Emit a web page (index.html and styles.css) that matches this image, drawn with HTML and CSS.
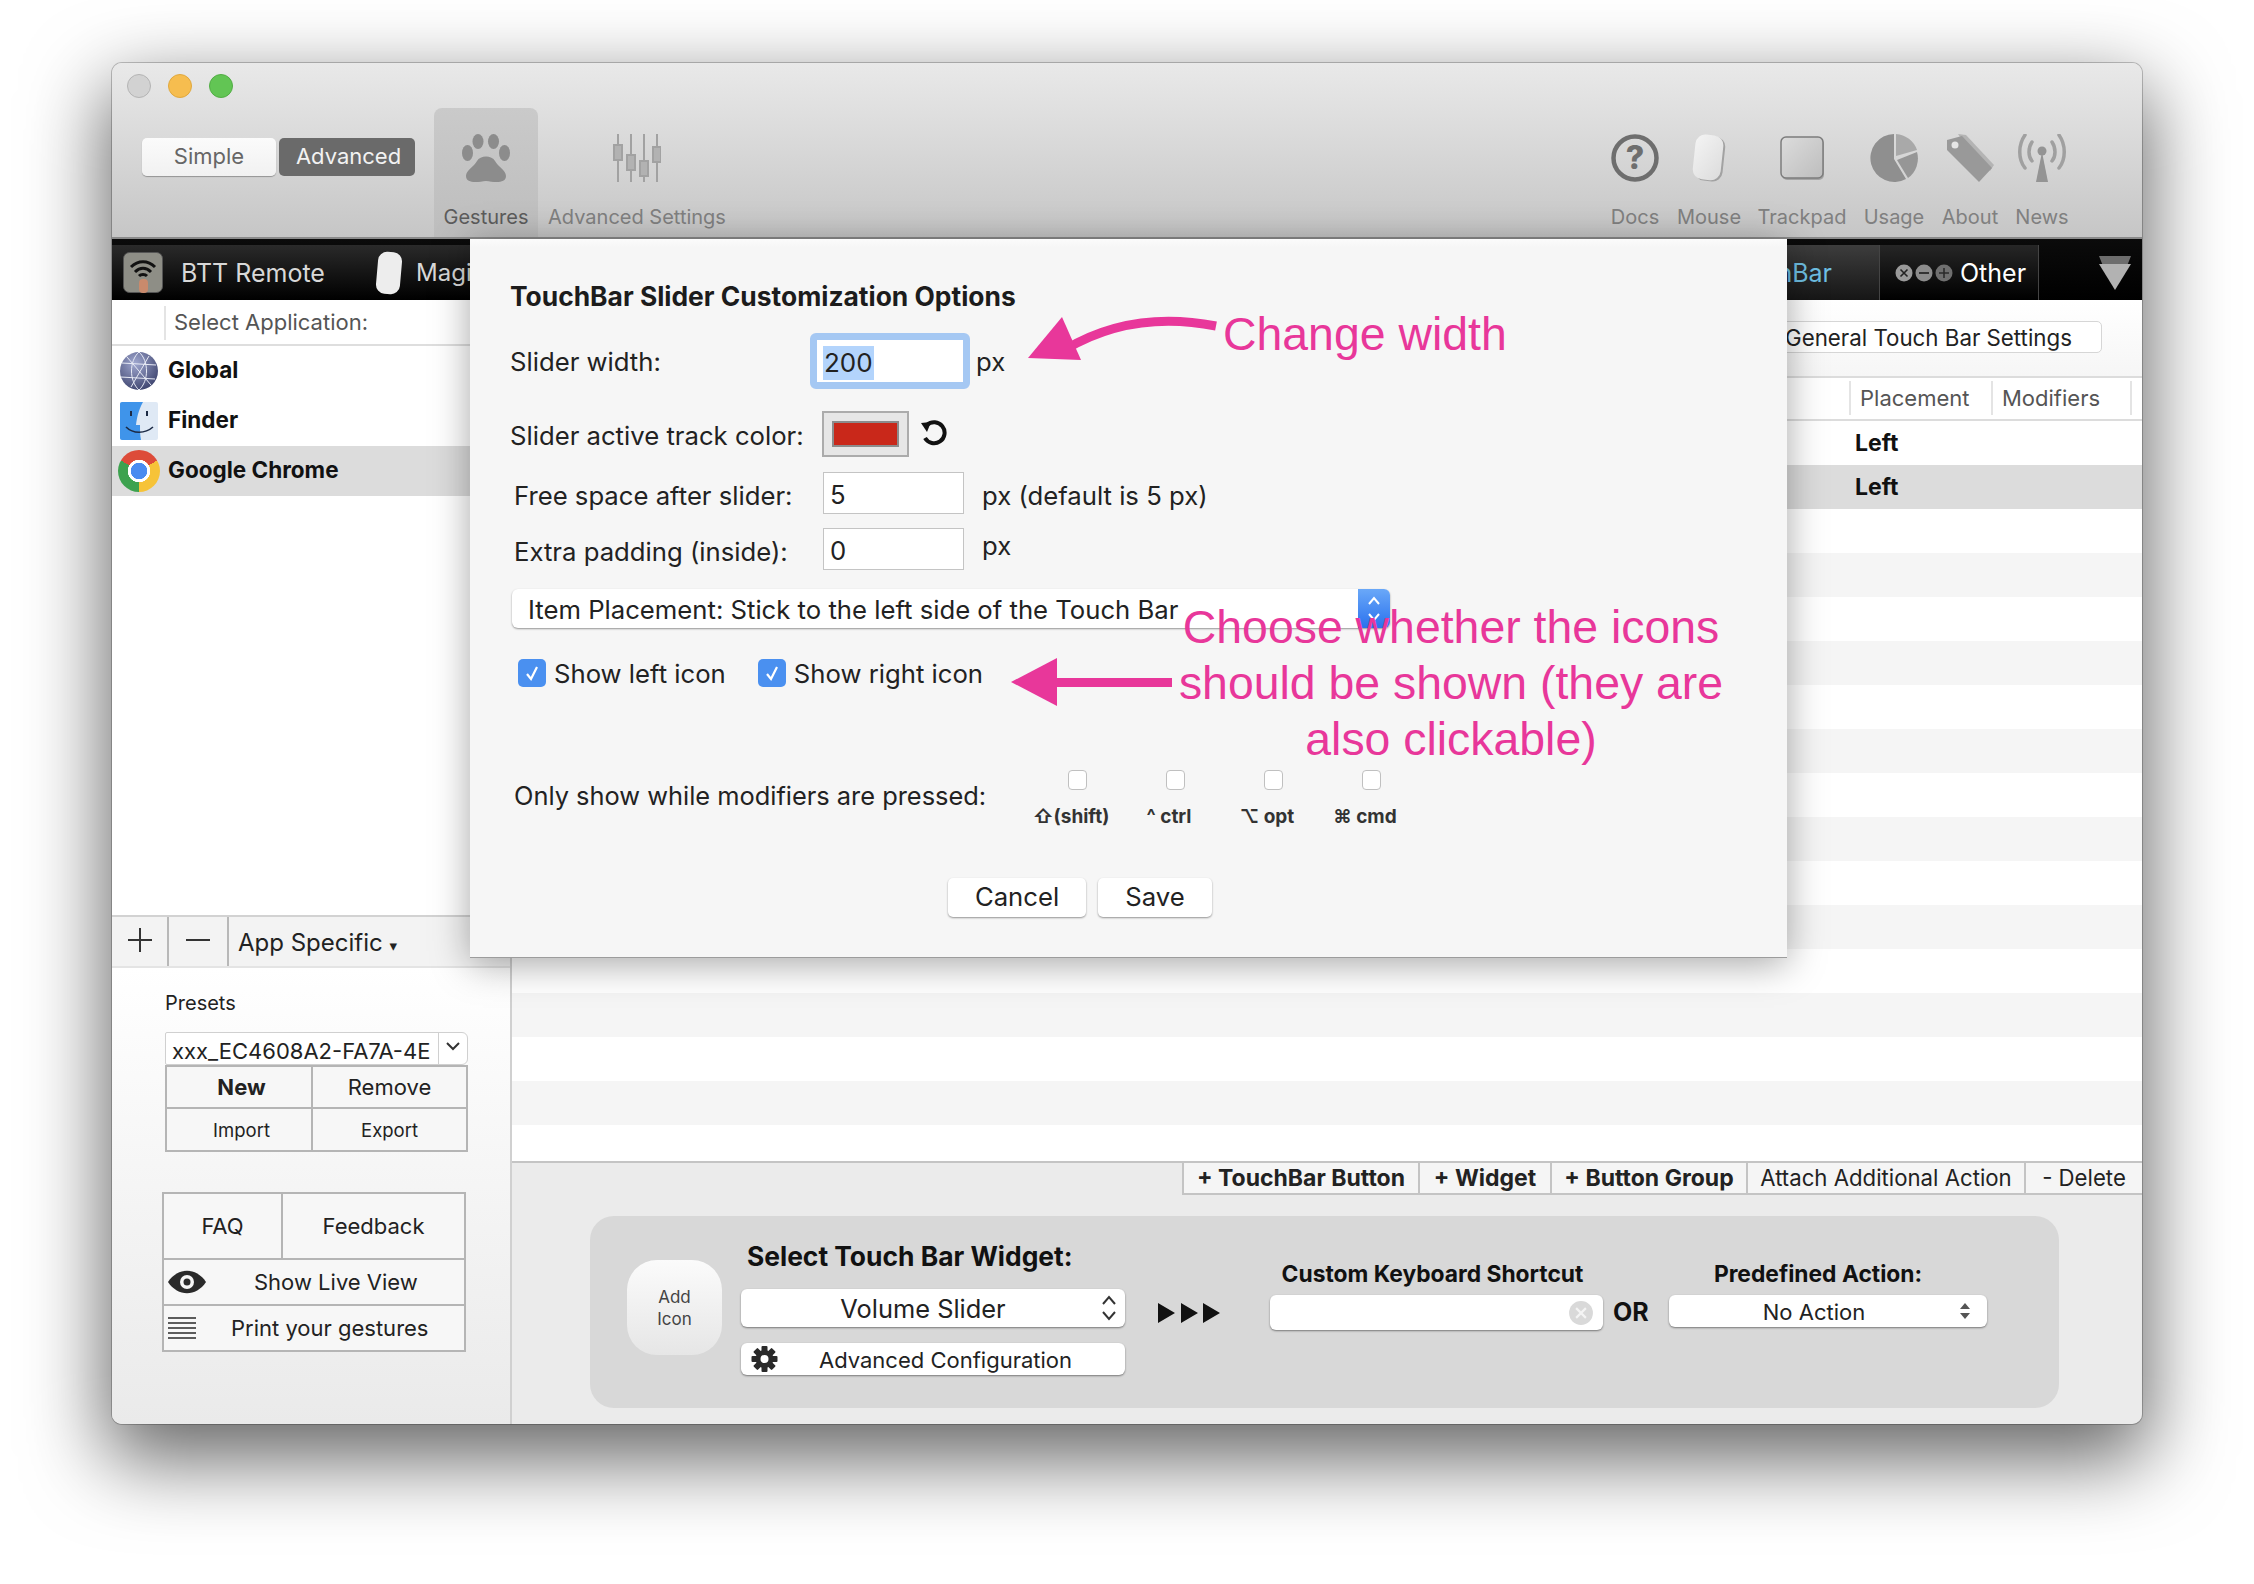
FILE: index.html
```html
<!DOCTYPE html>
<html lang="en">
<head>
  <meta charset="UTF-8">
  <title>BetterTouchTool</title>
  <link rel="stylesheet" href="styles.css">
</head>
<body>

<div class="window">

  <div class="toolbar">
    <div class="traffic">
      <span class="light light-grey"></span>
      <span class="light light-yellow"></span>
      <span class="light light-green"></span>
    </div>
    <div class="tools">
      <div class="segment">
        <span class="seg-btn seg-simple">Simple</span>
        <span class="seg-btn seg-advanced">Advanced</span>
      </div>
      <div class="tool tool-active tool-gestures">
        <svg class="tool-icon" width="48" height="48" viewBox="0 0 48 48" fill="#8c8c8c">
          <ellipse cx="5.5" cy="19" rx="5.5" ry="8"/>
          <ellipse cx="16" cy="7.5" rx="5.5" ry="7.5"/>
          <ellipse cx="31.5" cy="7.5" rx="5.5" ry="7.5"/>
          <ellipse cx="42.5" cy="19" rx="5.5" ry="8"/>
          <path d="M4 42C4 36 12 33 15 27C18 21 30 21 33 27C36 33 44 36 44 42C44 50 32 48 24 47C16 48 4 50 4 42Z"/>
        </svg>
        <span class="tool-label">Gestures</span>
      </div>
      <div class="tool tool-settings">
        <svg class="tool-icon" width="48" height="48" viewBox="0 0 48 48" stroke="#a2a2a2" stroke-width="2" fill="#b2b2b2">
          <path d="M5 0V48M18 0V48M31 0V48M44 0V48" fill="none"/>
          <rect x="1" y="11" width="8" height="15"/>
          <rect x="14" y="21" width="8" height="15"/>
          <rect x="27" y="27" width="8" height="15"/>
          <rect x="40" y="13" width="8" height="15"/>
        </svg>
        <span class="tool-label">Advanced Settings</span>
      </div>

      <div class="tools-right">
        <div class="tool tool-docs">
          <svg class="tool-icon" width="48" height="48" viewBox="0 0 48 48">
            <circle cx="24" cy="24" r="21.5" fill="none" stroke="#6e6e6e" stroke-width="4.5"/>
            <text x="24" y="35" text-anchor="middle" class="svg-q">?</text>
          </svg>
          <span class="tool-label">Docs</span>
        </div>
        <div class="tool tool-mouse">
          <svg class="tool-icon" width="48" height="48" viewBox="0 0 48 48">
            <defs>
              <linearGradient id="mouseFill" x1="0" y1="0" x2="1" y2="1">
                <stop offset="0" stop-color="#f4f4f4"/>
                <stop offset="1" stop-color="#dcdcdc"/>
              </linearGradient>
            </defs>
            <rect x="11" y="2" width="28" height="45" rx="10" fill="#a2a2a2" transform="rotate(6 24 24)"/>
            <rect x="9" y="1" width="28" height="45" rx="10" fill="url(#mouseFill)" transform="rotate(6 24 24)"/>
          </svg>
          <span class="tool-label">Mouse</span>
        </div>
        <div class="tool tool-trackpad">
          <svg class="tool-icon" width="48" height="48" viewBox="0 0 48 48">
            <defs>
              <linearGradient id="padFill" x1="0" y1="0" x2="1" y2="1">
                <stop offset="0" stop-color="#dcdcdc"/>
                <stop offset="1" stop-color="#bdbdbd"/>
              </linearGradient>
            </defs>
            <rect x="4" y="5" width="42" height="41" rx="5" fill="#a4a4a4"/>
            <rect x="3" y="3" width="42" height="41" rx="5" fill="url(#padFill)" stroke="#7c7c7c" stroke-width="1.5"/>
          </svg>
          <span class="tool-label">Trackpad</span>
        </div>
        <div class="tool tool-usage">
          <svg class="tool-icon" width="48" height="48" viewBox="0 0 48 48">
            <path d="M24 25L24 0A24 24 0 1 0 36 45Z" fill="#8f8f8f"/>
            <path d="M26 22L26 0A24 24 0 0 1 47 16Z" fill="#a9a9a9"/>
            <path d="M27 26L47 18A24 24 0 0 1 38 44Z" fill="#969696"/>
          </svg>
          <span class="tool-label">Usage</span>
        </div>
        <div class="tool tool-about">
          <svg class="tool-icon" width="48" height="48" viewBox="0 0 48 48">
            <path d="M12 0L20 1L48 31L44 37L14 3Z" fill="#b4b4b4"/>
            <path d="M1 6L16 2L46 34L33 48L1 16Z" fill="#999"/>
            <circle cx="9" cy="11" r="3.5" fill="#e6e6e6"/>
          </svg>
          <span class="tool-label">About</span>
        </div>
        <div class="tool tool-news">
          <svg class="tool-icon" width="48" height="48" viewBox="0 0 48 48">
            <path d="M24 18L18 48H30Z" fill="#949494"/>
            <circle cx="24" cy="17" r="4.5" fill="#949494"/>
            <path d="M14 8C10 14 10 22 14 27M34 8C38 14 38 22 34 27M7 1C0 11 0 25 7 34M41 1C48 11 48 25 41 34" fill="none" stroke="#a0a0a0" stroke-width="3.5" stroke-linecap="round"/>
          </svg>
          <span class="tool-label">News</span>
        </div>
      </div>
    </div>
  </div>

  <div class="tabbar">
    <div class="tab tab-btt">
      <svg width="40" height="41" viewBox="0 0 40 41">
        <rect x="0.5" y="0.5" width="39" height="40" rx="6" fill="#8e8e86" stroke="#555"/>
        <path d="M8 15C15 8 25 8 32 15M12 20C17 15 23 15 28 20M16 24C18 22 22 22 24 24" fill="none" stroke="#111" stroke-width="3"/>
        <rect x="16" y="27" width="9" height="14" rx="4" fill="#c98a6c"/>
      </svg>
      <span>BTT Remote</span>
    </div>
    <div class="tab tab-magic">
      <svg width="30" height="44" viewBox="0 0 30 44">
        <rect x="3" y="1" width="24" height="42" rx="9" fill="#ededed" transform="rotate(5 15 22)"/>
      </svg>
      <span>Magic Mouse</span>
    </div>
    <div class="tab tab-touchbar">
      <span>TouchBar</span>
    </div>
    <div class="tab tab-other">
      <svg width="58" height="18" viewBox="0 0 58 18">
        <circle cx="9" cy="9" r="8.5" fill="#9a9a9a"/>
        <path d="M5.5 5.5L12.5 12.5M12.5 5.5L5.5 12.5" stroke="#222" stroke-width="1.6"/>
        <circle cx="29" cy="9" r="8.5" fill="#8c8c8c"/>
        <path d="M24 9H34" stroke="#333" stroke-width="2"/>
        <circle cx="49" cy="9" r="8.5" fill="#6f6f6f"/>
        <path d="M44 9H54M49 4V14" stroke="#2b2b2b" stroke-width="1.6"/>
      </svg>
      <span>Other</span>
    </div>
    <div class="tab-end">
      <svg width="32" height="34" viewBox="0 0 32 34">
        <path d="M0 0H32L28 10H4Z" fill="#6d6d6d"/>
        <path d="M0 8H32L16 34Z" fill="#b2b2b2"/>
      </svg>
    </div>
  </div>

  <div class="main">

    <div class="sidebar">
      <div class="app-head"><span class="app-head-label">Select Application:</span></div>
      <div class="app-list">
        <div class="app-row">
          <svg width="40" height="40" viewBox="0 0 40 40">
            <defs>
              <radialGradient id="globeFill" cx="0.4" cy="0.3" r="0.8">
                <stop offset="0" stop-color="#a0a8d0"/>
                <stop offset="1" stop-color="#363c66"/>
              </radialGradient>
            </defs>
            <circle cx="20" cy="20" r="19" fill="url(#globeFill)"/>
            <path d="M20 1C10 10 10 30 20 39M20 1C30 10 30 30 20 39M3 12L37 14M2 26L36 28M8 6L32 34M30 5L12 36" fill="none" stroke="#e8ebf6" stroke-width="1"/>
          </svg>
          <span>Global</span>
        </div>
        <div class="app-row">
          <svg width="40" height="40" viewBox="0 0 40 40">
            <rect x="1" y="1" width="38" height="38" rx="2" fill="#dfe9f5"/>
            <path d="M3 1H24C19 10 18 17 17 24H21C21 30 21 34 22 39H3C1.900 39 1 38 1 37V3C1 1.900 1.900 1 3 1Z" fill="#3f94ea"/>
            <path d="M12 10V15M28 10V15" stroke="#1c2a44" stroke-width="2"/>
            <path d="M7 26C14 33 26 33 34 26" fill="none" stroke="#1c2a44" stroke-width="1.600"/>
          </svg>
          <span>Finder</span>
        </div>
        <div class="app-row app-row-active">
          <span class="chrome-icon"></span>
          <span>Google Chrome</span>
        </div>
      </div>
      <div class="app-bar">
        <span class="app-bar-btn app-bar-add">
          <svg width="24" height="24" viewBox="0 0 24 24"><path d="M12 0V24M0 12H24" stroke="#333" stroke-width="2"/></svg>
        </span>
        <span class="app-bar-btn app-bar-remove">
          <svg width="24" height="24" viewBox="0 0 24 24"><path d="M0 12H24" stroke="#333" stroke-width="2"/></svg>
        </span>
        <span class="app-bar-select">App Specific <span class="mini-caret">▾</span></span>
      </div>
      <div class="side-lower">
        <div class="presets-title">Presets</div>
        <div class="combo">
          <span class="combo-text">xxx_EC4608A2-FA7A-4E</span>
          <span class="combo-btn">
            <svg width="14" height="9" viewBox="0 0 14 9"><path d="M1 1L7 7L13 1" fill="none" stroke="#333" stroke-width="2"/></svg>
          </span>
        </div>
        <div class="btn-grid grid-presets">
          <div class="cell cell-bold">New</div>
          <div class="cell">Remove</div>
          <div class="cell cell-small">Import</div>
          <div class="cell cell-small">Export</div>
        </div>
        <div class="btn-grid grid-help">
          <div class="cell">FAQ</div>
          <div class="cell">Feedback</div>
          <div class="cell cell-wide cell-eye">
            <svg width="38" height="24" viewBox="0 0 38 24">
              <path d="M0 12C10 -3 28 -3 38 12C28 27 10 27 0 12Z" fill="#2a2a2a"/>
              <circle cx="19" cy="12" r="7" fill="#f6f6f6"/>
              <circle cx="19" cy="12" r="3.500" fill="#2a2a2a"/>
            </svg>
            <span>Show Live View</span>
          </div>
          <div class="cell cell-wide cell-print">
            <svg width="28" height="22" viewBox="0 0 28 22">
              <path d="M0 1H28M0 6H28M0 11H28M0 16H28M0 21H28" stroke="#2a2a2a" stroke-width="1.600"/>
            </svg>
            <span>Print your gestures</span>
          </div>
        </div>
      </div>
    </div>

    <div class="pane">
      <div class="pane-top">
        <span class="general-btn">General Touch Bar Settings</span>
      </div>
      <div class="table-head">
        <span></span>
        <span class="th">Placement</span>
        <span class="th">Modifiers</span>
        <span class="th"></span>
      </div>
      <div class="table-body">
        <div class="t-row"><span></span><span class="t-left">Left</span></div>
        <div class="t-row t-selected"><span></span><span class="t-left">Left</span></div>
        <div class="t-row"></div>
        <div class="t-row t-stripe"></div>
        <div class="t-row"></div>
        <div class="t-row t-stripe"></div>
        <div class="t-row"></div>
        <div class="t-row t-stripe"></div>
        <div class="t-row"></div>
        <div class="t-row t-stripe"></div>
        <div class="t-row"></div>
        <div class="t-row t-stripe"></div>
        <div class="t-row"></div>
        <div class="t-row t-stripe"></div>
        <div class="t-row"></div>
        <div class="t-row t-stripe"></div>
        <div class="t-row"></div>
      </div>
      <div class="action-bar">
        <span class="action action-bold action-first">+ TouchBar Button</span>
        <span class="action action-bold">+ Widget</span>
        <span class="action action-bold">+ Button Group</span>
        <span class="action">Attach Additional Action</span>
        <span class="action">- Delete</span>
      </div>
      <div class="pane-bottom">
        <div class="panel">
          <div class="add-icon">Add<br>Icon</div>
          <div class="widget-col">
            <div class="widget-title">Select Touch Bar Widget:</div>
            <div class="mac-select widget-select">
              <span>Volume Slider</span>
              <svg class="select-chevrons" width="16" height="28" viewBox="0 0 16 28">
                <path d="M2 10L8 3L14 10M2 18L8 25L14 18" fill="none" stroke="#333" stroke-width="2"/>
              </svg>
            </div>
            <div class="mac-select config-btn">
              <svg class="gear" width="27" height="26" viewBox="0 0 26 26">
                <g fill="#2a2a2a">
                  <rect x="10" y="0" width="6" height="26" rx="1"/>
                  <rect x="10" y="0" width="6" height="26" rx="1" transform="rotate(45 13 13)"/>
                  <rect x="10" y="0" width="6" height="26" rx="1" transform="rotate(90 13 13)"/>
                  <rect x="10" y="0" width="6" height="26" rx="1" transform="rotate(135 13 13)"/>
                  <circle cx="13" cy="13" r="9"/>
                </g>
                <circle cx="13" cy="13" r="4" fill="#fff"/>
              </svg>
              <span>Advanced Configuration</span>
            </div>
          </div>
          <svg class="run-arrows" width="62" height="20" viewBox="0 0 62 20">
            <path d="M0 0L17 10L0 20ZM23 0L40 10L23 20ZM45 0L62 10L45 20Z" fill="#111"/>
          </svg>
          <div class="shortcut-col">
            <div class="col-title">Custom Keyboard Shortcut</div>
            <div class="shortcut-input">
              <svg width="26" height="26" viewBox="0 0 24 24">
                <circle cx="12" cy="12" r="11" fill="#d9d9d9"/>
                <path d="M7.500 7.500L16.500 16.500M16.500 7.500L7.500 16.500" stroke="#f4f4f4" stroke-width="2"/>
              </svg>
            </div>
          </div>
          <div class="or-label">OR</div>
          <div class="action-col">
            <div class="col-title">Predefined Action:</div>
            <div class="mac-select action-select">
              <span>No Action</span>
              <svg class="select-chevrons" width="12" height="20" viewBox="0 0 12 20">
                <path d="M6 2L11 8H1ZM6 18L11 12H1Z" fill="#555"/>
              </svg>
            </div>
          </div>
        </div>
      </div>
    </div>

  </div>

  <!-- sheet over the window -->
  <div class="sheet">
    <div class="sheet-title">TouchBar Slider Customization Options</div>

    <div class="row row-slider">
      <label class="row-label">Slider width:</label>
      <div class="focus-ring"><span class="selected-text">200</span></div>
      <span class="unit unit-slider">px</span>
    </div>

    <div class="row row-color">
      <label class="row-label">Slider active track color:</label>
      <div class="color-well"><div class="color-fill"></div></div>
      <svg class="reset-icon" width="28" height="28" viewBox="0 0 28 28">
        <path d="M7 7A10.500 10.500 0 1 1 5 20" fill="none" stroke="#111" stroke-width="4"/>
        <path d="M1 5L11 4L7 14Z" fill="#111"/>
      </svg>
    </div>

    <div class="row row-free">
      <label class="row-label">Free space after slider:</label>
      <div class="text-input">5</div>
      <span class="unit">px (default is 5 px)</span>
    </div>

    <div class="row row-extra">
      <label class="row-label">Extra padding (inside):</label>
      <div class="text-input">0</div>
      <span class="unit unit-up">px</span>
    </div>

    <div class="placement">
      <span>Item Placement: Stick to the left side of the Touch Bar</span>
      <span class="stepper">
        <svg width="14" height="32" viewBox="0 0 14 32">
          <path d="M2 11L7 5L12 11M2 21L7 27L12 21" fill="none" stroke="#fff" stroke-width="2"/>
        </svg>
      </span>
    </div>

    <div class="row row-checks">
      <span class="check">
        <svg width="16" height="18" viewBox="0 0 16 18"><path d="M3 10L7 15L13 3" fill="none" stroke="#fff" stroke-width="2.200"/></svg>
      </span>
      <span class="check-label">Show left icon</span>
      <span class="check check-second">
        <svg width="16" height="18" viewBox="0 0 16 18"><path d="M3 10L7 15L13 3" fill="none" stroke="#fff" stroke-width="2.200"/></svg>
      </span>
      <span class="check-label">Show right icon</span>
    </div>

    <div class="row row-mods">
      <label class="row-label">Only show while modifiers are pressed:</label>
      <div class="mod"><span class="mod-box"></span><span class="mod-label">⇧(shift)</span></div>
      <div class="mod"><span class="mod-box"></span><span class="mod-label">^ ctrl</span></div>
      <div class="mod"><span class="mod-box"></span><span class="mod-label">⌥ opt</span></div>
      <div class="mod"><span class="mod-box"></span><span class="mod-label">⌘ cmd</span></div>
    </div>

    <div class="sheet-buttons">
      <span class="mac-btn btn-cancel">Cancel</span>
      <span class="mac-btn btn-save">Save</span>
    </div>

    <!-- annotations -->
    <svg class="arrows" width="1317" height="719" viewBox="0 0 1317 719">
      <path d="M746 87C690 76 640 84 596 110" fill="none" stroke="#e8379a" stroke-width="9"/>
      <path d="M558 119L592 78L611 121Z" fill="#e8379a"/>
      <path d="M587 443V419L541 443L587 467Z" fill="#e8379a"/>
      <path d="M580 439H702V448H580Z" fill="#e8379a"/>
    </svg>
    <div class="note note-width">Change width</div>
    <div class="note note-icons">Choose whether the icons<br>should be shown (they are<br>also clickable)</div>
  </div>

</div>

</body>
</html>
```

FILE: styles.css
```css
* {
  box-sizing: border-box;
}

html, body {
  margin: 0;
  padding: 0;
  height: 1584px;
  overflow: hidden;
  background-color: #ffffff;
}

body {
  font-family: Inter, "DejaVu Sans", sans-serif;
  font-size: 24px;
  color: #222222;
}

.window {
  position: relative;
  display: flex;
  flex-direction: column;
  width: 2030px;
  height: 1361px;
  margin: 63px 0 0 112px;
  border-radius: 10px;
  overflow: hidden;
  background-color: #ebebeb;
  box-shadow: 0 0 0 1px rgba(0, 0, 0, 0.22);
}

body::before {
  content: "";
  position: absolute;
  left: 112px;
  top: 63px;
  width: 2030px;
  height: 1361px;
  border-radius: 10px;
  box-shadow: 0 30px 80px 6px rgba(0, 0, 0, 0.6);
}

/* toolbar */
.toolbar {
  height: 176px;
  flex-shrink: 0;
  background: linear-gradient(#e9e9e9, #c6c6c6);
  border-bottom: 2px solid #8a8a8a;
}

.traffic {
  display: flex;
  gap: 17px;
  height: 45px;
  padding: 11px 0 0 15px;
}

.light {
  width: 24px;
  height: 24px;
  border-radius: 50%;
}

.light-grey {
  background-color: #d2d2d2;
  border: 1px solid #b4b4b4;
}

.light-yellow {
  background-color: #f6bd4f;
  border: 1px solid #e0a83e;
}

.light-green {
  background-color: #62c554;
  border: 1px solid #52ad45;
}

.tools {
  display: flex;
  height: 129px;
  padding-left: 30px;
}

.segment {
  display: flex;
  gap: 3px;
  margin: 30px 19px 0 0;
  height: 38px;
  font-size: 22px;
}

.seg-btn {
  display: flex;
  align-items: center;
  justify-content: center;
  border-radius: 5px;
  padding-bottom: 2px;
}

.seg-simple {
  width: 134px;
  background: linear-gradient(#fbfbfb, #f1f1f1);
  color: #666666;
  box-shadow: 0 1px 1px rgba(0, 0, 0, 0.3);
}

.seg-advanced {
  width: 136px;
  padding-left: 3px;
  background-color: #6a6a6a;
  color: #f2f2f2;
}

.tool {
  display: flex;
  flex-direction: column;
  align-items: center;
  padding-top: 26px;
}

.tool-icon {
  flex-shrink: 0;
}

.tool-label {
  margin-top: 23px;
  font-size: 20px;
  line-height: 24px;
  color: #808080;
  white-space: nowrap;
}

.tool-active {
  border-radius: 8px 8px 0 0;
  background: linear-gradient(#cacaca, #bdbdbd);
}

.tool-active .tool-label {
  color: #5c5c5c;
}

.tool-gestures { width: 104px; }
.tool-settings { width: 198px; }

.tools-right {
  display: flex;
  margin-left: auto;
  margin-right: 67px;
}

.tool-docs { width: 72px; }
.tool-mouse { width: 76px; }
.tool-trackpad { width: 110px; }
.tool-usage { width: 74px; }
.tool-about { width: 78px; }
.tool-news { width: 66px; }

.svg-q {
  font-family: Inter, sans-serif;
  font-size: 32px;
  font-weight: 800;
  fill: #6e6e6e;
}

/* tabs */
.tabbar {
  display: flex;
  height: 61px;
  flex-shrink: 0;
  padding: 6px 2px 0 0;
  background: linear-gradient(#0b0b0b, #000000);
  font-size: 25px;
  color: #d8d8d8;
}

.tab {
  display: flex;
  align-items: center;
  background: linear-gradient(#2a2a2a, #000000);
}

.tab-btt {
  width: 236px;
  gap: 18px;
  padding-left: 11px;
}

.tab-magic {
  width: 400px;
  gap: 12px;
  padding-left: 26px;
  font-size: 24px;
}

.tab-touchbar {
  margin-left: auto;
  padding: 0 47px 0 30px;
  background: linear-gradient(#3d3d3d, #161616);
  color: #6fc0e4;
}

.tab-other {
  width: 160px;
  gap: 7px;
  padding-left: 15px;
  border-left: 1px solid #444444;
  border-right: 1px solid #444444;
  background: linear-gradient(#262626, #000000);
  color: #ffffff;
}

.tab-end {
  display: flex;
  align-items: center;
  width: 101px;
  padding-left: 60px;
}

.main {
  display: flex;
  flex: 1;
  min-height: 0;
}

/* sidebar */
.sidebar {
  display: flex;
  flex-direction: column;
  width: 400px;
  flex-shrink: 0;
  border-right: 2px solid #d0d0d0;
}

.app-head {
  height: 46px;
  flex-shrink: 0;
  padding: 6px 0 0 52px;
  background-color: #ffffff;
  border-bottom: 2px solid #dedede;
  font-size: 22px;
  color: #555555;
}

.app-head-label {
  display: block;
  height: 34px;
  line-height: 32px;
  padding-left: 8px;
  border-left: 2px solid #e4e4e4;
}

.app-list {
  flex: 1;
  background-color: #ffffff;
}

.app-row {
  display: flex;
  align-items: center;
  gap: 9px;
  height: 50px;
  padding-left: 7px;
  font-weight: 700;
  font-size: 22.5px;
  line-height: 26px;
  color: #111111;
}

.app-row span:last-child {
  margin-top: -2px;
}

.app-row-active {
  background-color: #dcdcdc;
}

.chrome-icon {
  width: 42px;
  height: 42px;
  margin-left: -1px;
  margin-right: -1px;
  border-radius: 50%;
  background:
    radial-gradient(circle, #4a8cf0 0 8px, #ffffff 8.5px 11px, transparent 11.5px),
    conic-gradient(from 300deg, #dd4b39 0 120deg, #f6c338 120deg 240deg, #3da24f 240deg 360deg);
}

.app-bar {
  display: flex;
  height: 53px;
  flex-shrink: 0;
  background-color: #f3f3f3;
  border-top: 2px solid #d2d2d2;
  border-bottom: 2px solid #e4e4e4;
}

.app-bar-btn {
  display: flex;
  align-items: center;
  justify-content: center;
  border-right: 2px solid #b8b8b8;
  padding-bottom: 4px;
}

.app-bar-add { width: 57px; }
.app-bar-remove { width: 60px; }

.app-bar-select {
  padding: 1px 0 0 9px;
  line-height: 50px;
  font-size: 24px;
  white-space: nowrap;
}

.mini-caret {
  font-size: 15px;
}

.side-lower {
  height: 456px;
  flex-shrink: 0;
  padding-left: 53px;
  background: linear-gradient(#ffffff, #eaeaea);
}

.presets-title {
  margin-top: 23px;
  height: 24px;
  line-height: 24px;
  font-size: 20px;
  color: #222222;
}

.combo {
  display: flex;
  width: 303px;
  height: 33px;
  margin-top: 17px;
  background-color: #ffffff;
  border: 1px solid #d0d0d0;
  border-radius: 2px 6px 6px 2px;
}

.combo-text {
  width: 272px;
  padding: 5px 0 0 6px;
  line-height: 26px;
  font-size: 22px;
  white-space: nowrap;
}

.combo-btn {
  display: flex;
  align-items: center;
  justify-content: center;
  flex: 1;
  border-left: 1px solid #d0d0d0;
  padding-bottom: 4px;
}

.btn-grid {
  display: grid;
  gap: 2px;
  background-color: #b5b5b5;
  border: 2px solid #b5b5b5;
}

.grid-presets {
  grid-template-columns: 144px 153px;
  grid-template-rows: 40px 41px;
  width: 303px;
  font-size: 22px;
}

.grid-presets .cell:nth-child(odd) {
  padding-left: 5px;
}

.grid-help {
  grid-template-columns: 117px 181px;
  grid-template-rows: 64px 44px 44px;
  width: 304px;
  margin: 40px 0 0 -3px;
  font-size: 22px;
}

.cell {
  display: flex;
  align-items: center;
  justify-content: center;
  background-color: #f7f7f7;
}

.cell-bold {
  font-weight: 700;
}

.cell-small {
  font-size: 18.5px;
}

.cell-wide {
  grid-column: 1 / 3;
  justify-content: flex-start;
  padding-left: 4px;
}

.cell-eye span {
  margin-left: 48px;
}

.cell-print span {
  margin-left: 35px;
}

/* right side */
.pane {
  display: flex;
  flex-direction: column;
  flex: 1;
  min-width: 0;
}

.pane-top {
  display: flex;
  justify-content: flex-end;
  height: 76px;
  flex-shrink: 0;
  padding: 21px 40px 0 0;
  background: linear-gradient(#ffffff, #f6f6f6);
}

.general-btn {
  display: flex;
  align-items: center;
  height: 32px;
  width: 400px;
  padding: 1px 0 0 82px;
  background-color: #ffffff;
  border: 1px solid #d6d6d6;
  border-radius: 5px;
  font-size: 22.3px;
  white-space: nowrap;
}

.table-head {
  display: grid;
  grid-template-columns: 1337px 142px 139px 12px;
  height: 45px;
  flex-shrink: 0;
  padding: 3px 0 5px;
  background-color: #ffffff;
  border-top: 2px solid #dcdcdc;
  border-bottom: 2px solid #dcdcdc;
  font-size: 22px;
  color: #555555;
}

.th {
  padding-left: 9px;
  line-height: 34px;
  border-left: 2px solid #e4e4e4;
}

.table-body {
  height: 740px;
  flex-shrink: 0;
  overflow: hidden;
  background-color: #ffffff;
}

.t-row {
  display: grid;
  grid-template-columns: 1343px 1fr;
  height: 44px;
  line-height: 44px;
}

.t-stripe {
  background-color: #f5f5f5;
}

.t-selected {
  background-color: #dcdcdc;
}

.t-left {
  font-weight: 700;
  font-size: 23px;
  color: #111111;
}

.action-bar {
  display: flex;
  justify-content: flex-end;
  height: 34px;
  flex-shrink: 0;
  background-color: #ebebeb;
  border-top: 2px solid #c4c4c4;
  font-size: 22.2px;
  line-height: 30px;
}

.action {
  display: flex;
  align-items: center;
  justify-content: center;
  background-color: #f5f5f5;
  border-right: 2px solid #c4c4c4;
  border-bottom: 2px solid #c4c4c4;
  white-space: nowrap;
}

.action:nth-child(1) { width: 238px; border-left: 2px solid #c4c4c4; }
.action:nth-child(2) { width: 132px; }
.action:nth-child(3) { width: 196px; }
.action:nth-child(4) { width: 278px; }
.action:nth-child(5) { width: 116px; border-right: none; }

.action-bold {
  font-size: 23px;
  font-weight: 700;
}

.pane-bottom {
  flex: 1;
  padding: 21px 0 0 78px;
}

.panel {
  display: flex;
  align-items: flex-start;
  width: 1469px;
  height: 192px;
  border-radius: 24px;
  background-color: #d8d8d8;
}

.add-icon {
  display: flex;
  align-items: center;
  justify-content: center;
  width: 95px;
  height: 95px;
  margin: 44px 0 0 37px;
  border-radius: 30px;
  background: linear-gradient(#fbfbfb, #e6e6e6);
  font-size: 17px;
  line-height: 22px;
  text-align: center;
  color: #444444;
}

.widget-col {
  width: 384px;
  margin-left: 19px;
  padding-top: 22px;
}

.widget-title {
  height: 36px;
  padding-left: 6px;
  line-height: 36px;
  font-size: 26.4px;
  font-weight: 700;
  color: #111111;
  white-space: nowrap;
}

.mac-select {
  position: relative;
  display: flex;
  align-items: center;
  justify-content: center;
  background-color: #ffffff;
  border-radius: 6px;
  box-shadow: 0 1px 2px rgba(0, 0, 0, 0.45);
}

.widget-select {
  height: 38px;
  margin-top: 15px;
  padding: 0 20px 0 0;
  font-size: 25.4px;
}

.select-chevrons {
  position: absolute;
  right: 8px;
  top: 50%;
  transform: translateY(-50%);
}

.config-btn {
  justify-content: flex-start;
  height: 32px;
  margin-top: 16px;
  padding-left: 10px;
  font-size: 22px;
}

.gear {
  flex-shrink: 0;
}

.config-btn span {
  margin: 2px 0 0 41px;
  white-space: nowrap;
}

.run-arrows {
  margin: 87px 0 0 33px;
  flex-shrink: 0;
}

.col-title {
  height: 28px;
  margin-top: 44px;
  line-height: 28px;
  font-size: 22.8px;
  font-weight: 700;
  color: #111111;
  text-align: center;
  white-space: nowrap;
}

.shortcut-col {
  width: 333px;
  margin-left: 50px;
}

.shortcut-col .col-title {
  padding-right: 8px;
}

.shortcut-input {
  display: flex;
  align-items: center;
  justify-content: flex-end;
  height: 35px;
  margin-top: 7px;
  padding-right: 9px;
  background-color: #ffffff;
  border-radius: 6px;
  box-shadow: 0 1px 2px rgba(0, 0, 0, 0.45);
}

.or-label {
  width: 38px;
  margin: 79px 0 0 10px;
  line-height: 35px;
  font-size: 25px;
  font-weight: 700;
  color: #111111;
}

.action-col {
  width: 318px;
  margin-left: 18px;
}

.action-col .col-title {
  padding-right: 20px;
}

.action-select {
  height: 32px;
  margin-top: 7px;
  padding: 2px 28px 0 0;
  font-size: 22px;
}

.action-select .select-chevrons {
  right: 16px;
}

/* sheet */
.sheet {
  position: absolute;
  left: 358px;
  top: 176px;
  width: 1317px;
  height: 719px;
  padding-top: 38px;
  background: linear-gradient(#fbfbfb, #f6f6f6 9px);
  border-bottom: 1px solid #9c9c9c;
  box-shadow: 0 6px 36px rgba(0, 0, 0, 0.35);
  font-size: 25.7px;
}

.sheet-title {
  height: 40px;
  padding-left: 40px;
  line-height: 38px;
  font-size: 26.4px;
  font-weight: 700;
  color: #1c1c1c;
}

.row {
  display: flex;
  align-items: center;
}

.row-label {
  flex-shrink: 0;
  white-space: nowrap;
}

.row-slider {
  height: 56px;
  margin-top: 16px;
  padding-left: 40px;
}

.row-slider .row-label { width: 300px; padding-top: 1px; }

.focus-ring {
  width: 160px;
  height: 56px;
  padding: 4px 7px 0;
  background-color: #ffffff;
  border: 7px solid #a5c8f3;
  border-radius: 6px;
  background-clip: padding-box;
  display: flex;
  align-items: center;
}

.selected-text {
  padding: 2px 1px;
  margin-left: -1px;
  background-color: #b3d4fc;
  font-size: 26px;
  line-height: 30px;
}

.unit-slider {
  margin-left: 6px;
}

.row-color {
  height: 46px;
  margin-top: 22px;
  padding-left: 40px;
}

.row-color .row-label { width: 312px; padding-top: 2px; }

.color-well {
  width: 87px;
  height: 46px;
  padding: 8px;
  background-color: #e6e6e6;
  border: 2px solid #ababab;
}

.color-fill {
  height: 26px;
  background-color: #c9281a;
  border: 2px solid #8c8c8c;
}

.reset-icon {
  margin: -4px 0 0 11px;
}

.row-free {
  height: 42px;
  margin-top: 15px;
  padding-left: 44px;
}

.row-extra {
  height: 42px;
  margin-top: 14px;
  padding-left: 44px;
}

.row-free .row-label,
.row-extra .row-label { width: 309px; padding-top: 5px; }

.text-input {
  width: 141px;
  height: 42px;
  padding: 3px 0 0 6px;
  line-height: 38px;
  background-color: #ffffff;
  border: 1px solid #c4c4c4;
}

.row-free .unit,
.row-extra .unit {
  margin-left: 18px;
  padding-top: 5px;
}

.unit-up {
  position: relative;
  top: -6px;
}

.placement {
  display: flex;
  align-items: center;
  width: 878px;
  height: 39px;
  margin: 19px 0 0 42px;
  padding: 0 0 0 16px;
  background-color: #ffffff;
  border-radius: 6px;
  box-shadow: 0 1px 2px rgba(0, 0, 0, 0.4);
  overflow: hidden;
}

.placement > span:first-child {
  margin-top: 2px;
}

.stepper {
  display: flex;
  align-items: center;
  justify-content: center;
  width: 32px;
  height: 39px;
  margin-left: auto;
  background: linear-gradient(#6aa8f8, #2a72ee);
}

.row-checks {
  height: 28px;
  margin-top: 31px;
  padding-left: 48px;
}

.check {
  display: flex;
  align-items: center;
  justify-content: center;
  width: 28px;
  height: 28px;
  background-color: #4a90f0;
  border-radius: 5px;
}

.check-label {
  margin-left: 8px;
}

.check-second {
  margin-left: 32px;
}

.row-mods {
  align-items: flex-start;
  margin-top: 83px;
  padding-left: 44px;
}

.row-mods .row-label {
  width: 514px;
  margin-top: 11px;
  line-height: 30px;
  font-size: 25.4px;
}

.mod {
  display: flex;
  flex-direction: column;
  align-items: center;
  width: 98px;
}

.mod-box {
  width: 19px;
  height: 20px;
  background-color: #ffffff;
  border: 1px solid #c0c0c0;
  border-radius: 4px;
}

.mod-label {
  margin: 16px 12px 0 0;
  line-height: 22px;
  font-size: 19px;
  font-weight: 700;
  color: #333333;
  white-space: nowrap;
}

.sheet-buttons {
  display: flex;
  gap: 12px;
  margin: 50px 0 0 478px;
}

.mac-btn {
  display: flex;
  align-items: center;
  justify-content: center;
  height: 39px;
  padding-bottom: 2px;
  background-color: #ffffff;
  border-radius: 5px;
  box-shadow: 0 1px 2px rgba(0, 0, 0, 0.4);
}

.btn-cancel { width: 138px; }
.btn-save { width: 114px; }

.arrows {
  position: absolute;
  left: 0;
  top: 0;
  pointer-events: none;
}

.note {
  position: absolute;
  font-family: "Liberation Sans", Arial, sans-serif;
  font-size: 46.4px;
  color: #e8379a;
  white-space: nowrap;
}

.note-width {
  left: 753px;
  top: 69px;
  line-height: 52px;
}

.note-icons {
  left: 701px;
  top: 360px;
  width: 560px;
  line-height: 56px;
  text-align: center;
}
```
